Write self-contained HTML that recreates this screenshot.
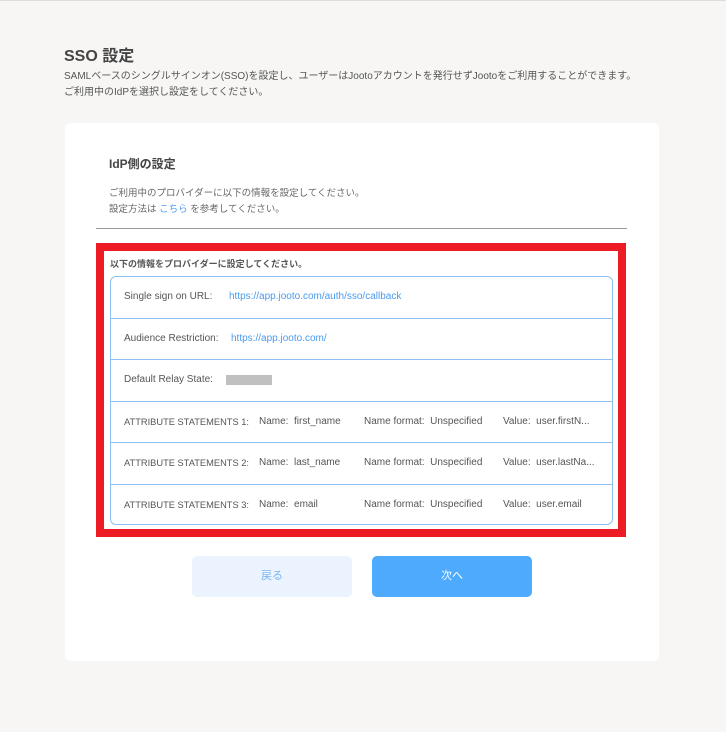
<!DOCTYPE html>
<html><head><meta charset="utf-8"><style>
*{margin:0;padding:0;box-sizing:border-box}
body{width:726px;height:732px;background:#f7f6f5;font-family:"Liberation Sans","Noto Sans CJK JP",sans-serif;color:#555;position:relative;overflow:hidden;border-top:1px solid #ddd}
.abs{position:absolute;white-space:nowrap}
h1{position:absolute;left:64px;top:41px;font-size:16px;font-weight:bold;color:#444}
.desc{left:64px;top:68px;font-size:10px;line-height:16px;color:#555}
.card{position:absolute;left:65px;top:122px;width:594px;height:538px;background:#fff;border-radius:6px}
.red{position:absolute;left:96px;top:242px;width:530px;height:294px;border:8px solid #ed1c24;background:#fff}
.tbl{position:absolute;left:110px;top:275px;width:503px;height:249px;border:1px solid #8cc1f2;border-radius:6px;overflow:hidden}
.row{height:41.5px;border-bottom:1px solid #8cc1f2;font-size:10px;color:#555;position:relative}
.row:last-child{border-bottom:none}
.row span{position:absolute;top:14px;white-space:nowrap}
.row span.at{font-size:9.3px;top:15px}
a{color:#4a9bf0;text-decoration:none}
.btn{position:absolute;top:555px;height:41px;border-radius:5px;font-size:11px;text-align:center;line-height:41px}
</style></head><body>
<h1>SSO 設定</h1>
<div class="abs desc">SAMLベースのシングルサインオン(SSO)を設定し、ユーザーはJootoアカウントを発行せずJootoをご利用することができます。<br>ご利用中のIdPを選択し設定をしてください。</div>
<div class="card"></div>
<div class="abs" style="left:109px;top:154px;font-size:12px;font-weight:bold;color:#444">IdP側の設定</div>
<div class="abs" style="left:109px;top:185px;font-size:9.5px;line-height:16px;color:#666">ご利用中のプロバイダーに以下の情報を設定してください。<br>設定方法は <a>こちら</a> を参考してください。</div>
<div style="position:absolute;left:96px;top:227px;width:531px;height:1px;background:#999"></div>
<div class="red"></div>
<div class="abs" style="left:110px;top:256px;font-size:9px;font-weight:bold;color:#555">以下の情報をプロバイダーに設定してください。</div>
<div class="tbl">
<div class="row"><span style="left:13px">Single sign on URL:</span><span style="left:118px"><a>https://app.jooto.com/auth/sso/callback</a></span></div>
<div class="row"><span style="left:13px">Audience Restriction:</span><span style="left:120px"><a>https://app.jooto.com/</a></span></div>
<div class="row"><span style="left:13px">Default Relay State:</span><span style="left:115px;top:15px;width:46px;height:10px;background:#c0c0c0"></span></div>
<div class="row"><span class="at" style="left:13px">ATTRIBUTE STATEMENTS 1:</span><span style="left:148px">Name:&nbsp; first_name</span><span style="left:253px">Name format:&nbsp; Unspecified</span><span style="left:392px">Value:&nbsp; user.firstN...</span></div>
<div class="row"><span class="at" style="left:13px">ATTRIBUTE STATEMENTS 2:</span><span style="left:148px">Name:&nbsp; last_name</span><span style="left:253px">Name format:&nbsp; Unspecified</span><span style="left:392px">Value:&nbsp; user.lastNa...</span></div>
<div class="row"><span class="at" style="left:13px">ATTRIBUTE STATEMENTS 3:</span><span style="left:148px">Name:&nbsp; email</span><span style="left:253px">Name format:&nbsp; Unspecified</span><span style="left:392px">Value:&nbsp; user.email</span></div>
</div>
<div class="btn" style="left:192px;width:160px;background:#ebf4fe;color:#7ab4f0">戻る</div>
<div class="btn" style="left:372px;width:160px;background:#4daafc;color:#fff">次へ</div>
</body></html>
